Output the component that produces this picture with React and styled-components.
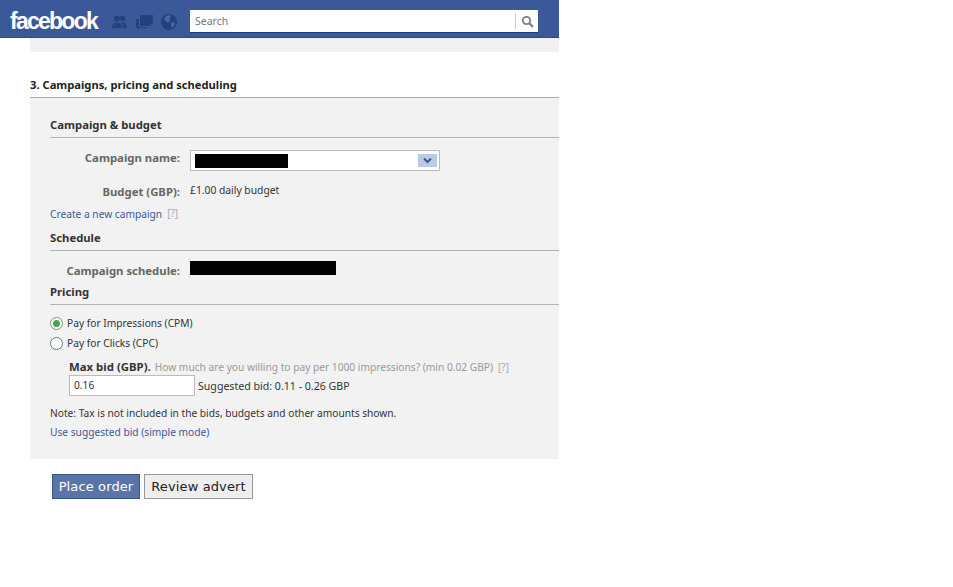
import React from 'react';
import styled, { createGlobalStyle } from 'styled-components';

const Global = createGlobalStyle`
html, body { margin: 0; padding: 0; background: #fff; }
body { font-family: "Noto Sans", "DejaVu Sans", sans-serif; font-size: 10.2px; color: #333; }
`

const Page = styled.div`
width: 559px;
height: 587px;
`

const TopBar = styled.div`
height: 38px;
box-sizing: border-box;
background: #3b5998;
border-bottom: 1px solid #2d4a8a;
display: flex;
align-items: center;
padding: 6px 0 0 10px;
`

const Logo = styled.div`
width: 91px;
font-family: "Liberation Sans", sans-serif;
font-weight: 700;
font-size: 23px;
letter-spacing: -1.75px;
color: #fff;
line-height: 31px;
`

const NavIcons = styled.div`
display: flex;
align-items: center;
gap: 8px;
margin-left: 10px;
width: 79px;
`

const Search = styled.div`
width: 348px;
height: 23px;
box-sizing: border-box;
background: #fff;
display: flex;
align-items: center;
border-bottom: 1px solid #1f3a78;
`

const SearchText = styled.div`
flex: 1;
padding-left: 5px;
color: #777;
font-size: 10.5px;
`

const SearchBtn = styled.div`
width: 22px;
height: 16px;
border-left: 1px solid #ccc;
display: flex;
align-items: center;
justify-content: center;
`

const Strip = styled.div`
margin-left: 30px;
height: 14px;
background: #f0f0f0;
`

const Content = styled.div`
margin-left: 30px;
padding-top: 25px;
`

const SectionTitle = styled.div`
font-weight: 700;
font-size: 11.2px;
line-height: 16px;
color: #222;
padding-bottom: 4px;
border-bottom: 1px solid #aaa;
`

const Panel = styled.div`
height: 361px;
background: #f2f2f2;
padding: 19px 0 0 20px;
box-sizing: border-box;
`

const GroupTitle = styled.div`
flex: 1;
font-weight: 700;
font-size: 11.3px;
line-height: 16px;
color: #333;
padding-bottom: 4px;
border-bottom: 1px solid #b4b4b4;
`

const Row = styled.div`
display: flex;
align-items: ${p => p.$align || 'center'};
margin-top: ${p => p.$top}px;
`

const Label = styled.div`
width: 140px;
padding-right: 10px;
margin-top: ${p => p.$drop || 0}px;
box-sizing: border-box;
text-align: right;
font-weight: 700;
font-size: 11.35px;
color: #666;
white-space: nowrap;
line-height: 16px;
`

const Select = styled.div`
width: 250px;
height: 21px;
box-sizing: border-box;
background: #fff;
border: 1px solid #bbb;
display: flex;
align-items: center;
justify-content: space-between;
padding: 0 2px 0 4px;
`

const Redacted = styled.div`
width: ${p => p.$w}px;
height: 14px;
background: #000;
`

const Arrow = styled.div`
width: 19px;
height: 13px;
background: #b9c9e8;
display: flex;
align-items: center;
justify-content: center;
`

const Value = styled.div`
color: #333;
font-size: ${p => p.$size || 10.3}px;
line-height: 16px;
white-space: nowrap;
`

const Link = styled.span`
color: #3b5998;
line-height: 16px;
white-space: nowrap;
`

const Help = styled.span`
display: inline-block;
color: #aaa;
font-size: 10px;
line-height: 12px;
margin: 0 0 2px 5px;
`

const RadioRow = styled.div`
display: flex;
align-items: center;
height: 20px;
color: #333;
`

const Radio = styled.span`
width: 13px;
height: 13px;
box-sizing: border-box;
border: 1px solid ${p => (p.$on ? '#6f9a78' : '#6b7a80')};
border-radius: 50%;
background: #fff;
margin-right: 4px;
display: flex;
align-items: center;
justify-content: center;
&::after {
  content: '';
  width: 7px;
  height: 7px;
  border-radius: 50%;
  background: ${p => (p.$on ? '#3fa652' : 'transparent')};
}
`

const BidBlock = styled.div`
margin: 6px 0 0 19px;
`

const BidLine = styled.div`
height: 16px;
line-height: 16px;
color: #999;
white-space: nowrap;
`

const BidStrong = styled.span`
font-weight: 700;
font-size: 11.4px;
color: #333;
margin-right: 4px;
`

const BidInputRow = styled.div`
display: flex;
align-items: center;
gap: 3px;
`

const BidInput = styled.div`
width: 126px;
height: 21px;
box-sizing: border-box;
background: #fff;
border: 1px solid #bbb;
padding-left: 4px;
line-height: 19px;
color: #333;
`

const Note = styled.div`
margin-top: ${p => p.$top}px;
line-height: 16px;
color: #333;
white-space: nowrap;
`

const Actions = styled.div`
display: flex;
gap: 4px;
margin: 15px 0 0 22px;
`

const Button = styled.div`
height: 25px;
box-sizing: border-box;
width: ${p => p.$w}px;
text-align: center;
font-family: "DejaVu Sans", sans-serif;
font-size: 13px;
letter-spacing: 0.12px;
line-height: 23px;
white-space: nowrap;
border: 1px solid ${p => (p.$primary ? '#3b5488' : '#999')};
background: ${p => (p.$primary ? '#5b74a8' : '#eeeeee')};
color: ${p => (p.$primary ? '#fff' : '#222')};
`

const FriendsIcon = () => (
    <svg width="17" height="16" viewBox="0 0 19 18" fill="#24407f">
        <circle cx="6.5" cy="5" r="3.4" />
        <path d="M1 16c0-4 1.5-6.5 5.5-6.5S12 12 12 16z" />
        <circle cx="13" cy="5" r="3" />
        <path d="M11 9.5c4-1 7 1.500 7 6.500h-4.500c0-3-1-5-2.500-6.500z" />
    </svg>
)

const MessagesIcon = () => (
    <svg width="17" height="16" viewBox="0 0 17 16" fill="#24407f">
        <path d="M4 1h13v9h-2v2H4z" />
        <path d="M0 5h3v8h8v1H4l-2 2v-2H0z" />
    </svg>
)

const GlobeIcon = () => (
    <svg width="16" height="16" viewBox="0 0 16 16">
        <circle cx="8" cy="8" r="8" fill="#24407f" />
        <path d="M5 2l4-1 1 2-2 2 1 2-2 2-2-2-2-2zM10 9l3-1 1 2-3 4-1-2z" fill="#4a66a5" />
    </svg>
)

const SearchIcon = () => (
    <svg width="13" height="13" viewBox="0 0 13 13" fill="none" stroke="#808080">
        <circle cx="5.500" cy="5.500" r="3.700" strokeWidth="1.800" />
        <path d="M8.300 8.300l3.700 3.700" strokeWidth="2.200" />
    </svg>
)

const ChevronIcon = () => (
    <svg width="9" height="7" viewBox="0 0 9 7" fill="none" stroke="#3d5a80" strokeWidth="2">
        <path d="M1 1.500l3.500 3.500L8 1.500" />
    </svg>
)

const App = () => {
    return (
        <Page>
            <Global />
            <TopBar>
                <Logo>facebook</Logo>
                <NavIcons>
                    <FriendsIcon />
                    <MessagesIcon />
                    <GlobeIcon />
                </NavIcons>
                <Search>
                    <SearchText>Search</SearchText>
                    <SearchBtn><SearchIcon /></SearchBtn>
                </Search>
            </TopBar>
            <Strip />
            <Content>
                <SectionTitle>3. Campaigns, pricing and scheduling</SectionTitle>
                <Panel>
                    <GroupTitle>Campaign &amp; budget</GroupTitle>
                    <Row $top={12} $align="flex-start">
                        <Label>Campaign name:</Label>
                        <Select>
                            <Redacted $w={93} />
                            <Arrow><ChevronIcon /></Arrow>
                        </Select>
                    </Row>
                    <Row $top={11} $align="flex-start">
                        <Label $drop={2}>Budget (GBP):</Label>
                        <Value>£1.00 daily budget</Value>
                    </Row>
                    <Row $top={6}>
                        <Link>Create a new campaign</Link>
                        <Help>[?]</Help>
                    </Row>
                    <Row $top={8}>
                        <GroupTitle>Schedule</GroupTitle>
                    </Row>
                    <Row $top={10} $align="flex-start">
                        <Label $drop={2}>Campaign schedule:</Label>
                        <Redacted $w={146} />
                    </Row>
                    <Row $top={5}>
                        <GroupTitle>Pricing</GroupTitle>
                    </Row>
                    <Note $top={8} />
                    <RadioRow><Radio $on />Pay for Impressions (CPM)</RadioRow>
                    <RadioRow><Radio />Pay for Clicks (CPC)</RadioRow>
                    <BidBlock>
                        <BidLine>
                            <BidStrong>Max bid (GBP).</BidStrong>
                            How much are you willing to pay per 1000 impressions? (min 0.02 GBP)
                            <Help>[?]</Help>
                        </BidLine>
                        <BidInputRow>
                            <BidInput>0.16</BidInput>
                            <Value $size={10.6}>Suggested bid: 0.11 - 0.26 GBP</Value>
                        </BidInputRow>
                    </BidBlock>
                    <Note $top={9}>Note: Tax is not included in the bids, budgets and other amounts shown.</Note>
                    <Row $top={3}><Link>Use suggested bid (simple mode)</Link></Row>
                </Panel>
                <Actions>
                    <Button $primary $w={88}>Place order</Button>
                    <Button $w={109}>Review advert</Button>
                </Actions>
            </Content>
        </Page>
    );
};

export default App;
